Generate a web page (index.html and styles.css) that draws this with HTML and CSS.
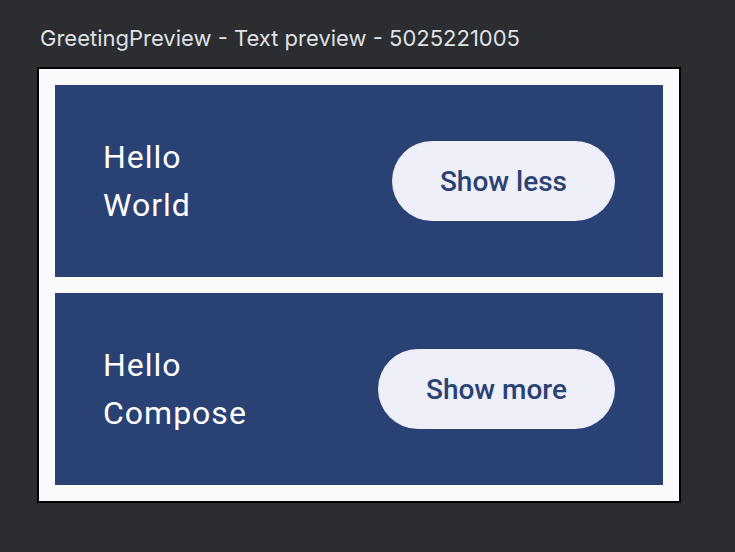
FILE: index.html
```html
<!DOCTYPE html>
<html>
<head>
<meta charset="utf-8">
<link rel="stylesheet" href="styles.css">
</head>
<body>
  <div class="title">GreetingPreview - Text preview - 5025221005</div>
  <div class="frame">
    <div class="card">
      <div class="text">
        <div>Hello</div>
        <div>World</div>
      </div>
      <button class="btn">Show less</button>
    </div>
    <div class="card">
      <div class="text">
        <div>Hello</div>
        <div>Compose</div>
      </div>
      <button class="btn">Show more</button>
    </div>
  </div>
</body>
</html>
```
FILE: styles.css
```css
html, body {
  margin: 0;
  padding: 0;
  background: #2b2d30;
}
body {
  width: 735px;
  height: 552px;
  overflow: hidden;
}
.title {
  font-family: Inter, "Noto Sans", sans-serif;
  font-size: 22px;
  color: #dfe1e5;
  line-height: 24px;
  padding: 26px 0 0 40px;
  height: 67px;
  box-sizing: border-box;
  white-space: nowrap;
}
.frame {
  margin-left: 37px;
  width: 608px;
  border: 2px solid #000;
  background: #fafafa;
  padding: 16px;
  height: 400px;
  display: flex;
  flex-direction: column;
  gap: 16px;
}
.card {
  background: #2a4174;
  height: 192px;
  padding: 0 48px;
  display: flex;
  align-items: center;
  justify-content: space-between;
}
.text {
  font-family: Roboto, "Liberation Sans", sans-serif;
  font-size: 32px;
  line-height: 48px;
  letter-spacing: 1px;
  color: #ffffff;
}
.btn {
  font-family: Roboto, "Liberation Sans", sans-serif;
  font-weight: 500;
  font-size: 28px;
  letter-spacing: 0;
  color: #2a4174;
  background: #eeeff8;
  border: none;
  border-radius: 40px;
  height: 80px;
  padding: 0 48px;
  cursor: pointer;
}
```
